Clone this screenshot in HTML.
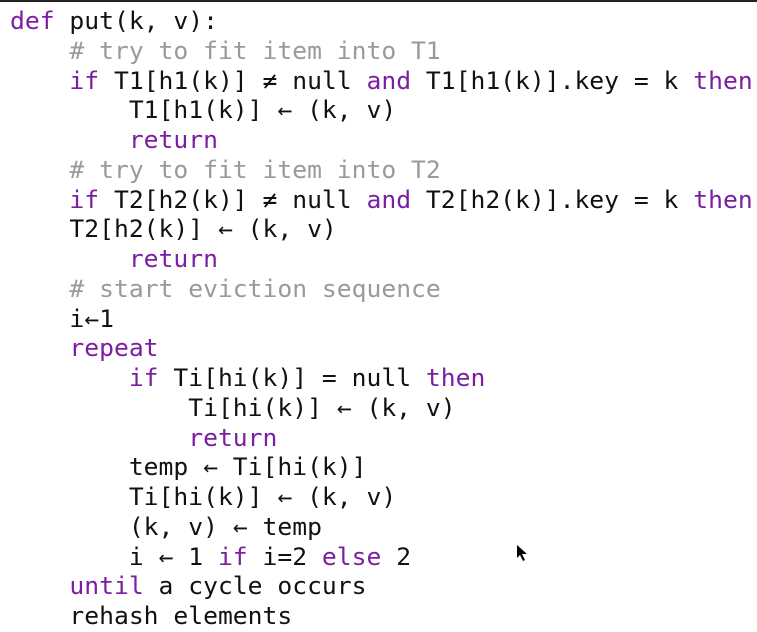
<!DOCTYPE html>
<html><head><meta charset="utf-8"><style>
html,body{margin:0;padding:0;background:#fff;width:757px;height:628px;overflow:hidden}
.top{position:absolute;left:0;top:0;width:757px;height:2px;background:#222}
pre{position:absolute;left:10px;top:7px;margin:0;font-family:"DejaVu Sans Mono","Liberation Mono",monospace;font-size:24.2px;line-height:29.75px;color:#111;transform:scaleX(1.02);transform-origin:0 0}
.k{color:#7b1fa2}.c{color:#9a9a9a}
.cur{position:absolute;left:517px;top:545px}
</style></head><body>
<div class="top"></div>
<pre><span class="k">def</span> put(k, v):
    <span class="c"># try to fit item into T1</span>
    <span class="k">if</span> T1[h1(k)] ≠ null <span class="k">and</span> T1[h1(k)].key = k <span class="k">then</span>
        T1[h1(k)] ← (k, v)
        <span class="k">return</span>
    <span class="c"># try to fit item into T2</span>
    <span class="k">if</span> T2[h2(k)] ≠ null <span class="k">and</span> T2[h2(k)].key = k <span class="k">then</span>
    T2[h2(k)] ← (k, v)
        <span class="k">return</span>
    <span class="c"># start eviction sequence</span>
    i←1
    <span class="k">repeat</span>
        <span class="k">if</span> Ti[hi(k)] = null <span class="k">then</span>
            Ti[hi(k)] ← (k, v)
            <span class="k">return</span>
        temp ← Ti[hi(k)]
        Ti[hi(k)] ← (k, v)
        (k, v) ← temp
        i ← 1 <span class="k">if</span> i=2 <span class="k">else</span> 2
    <span class="k">until</span> a cycle occurs
    rehash elements</pre>
<svg class="cur" width="12" height="18" viewBox="0 0 12 18"><path d="M0 0 L0 13 L3 10 L6 16 L8 15 L5 9 L10 9 Z" fill="#000"/></svg>
</body></html>
